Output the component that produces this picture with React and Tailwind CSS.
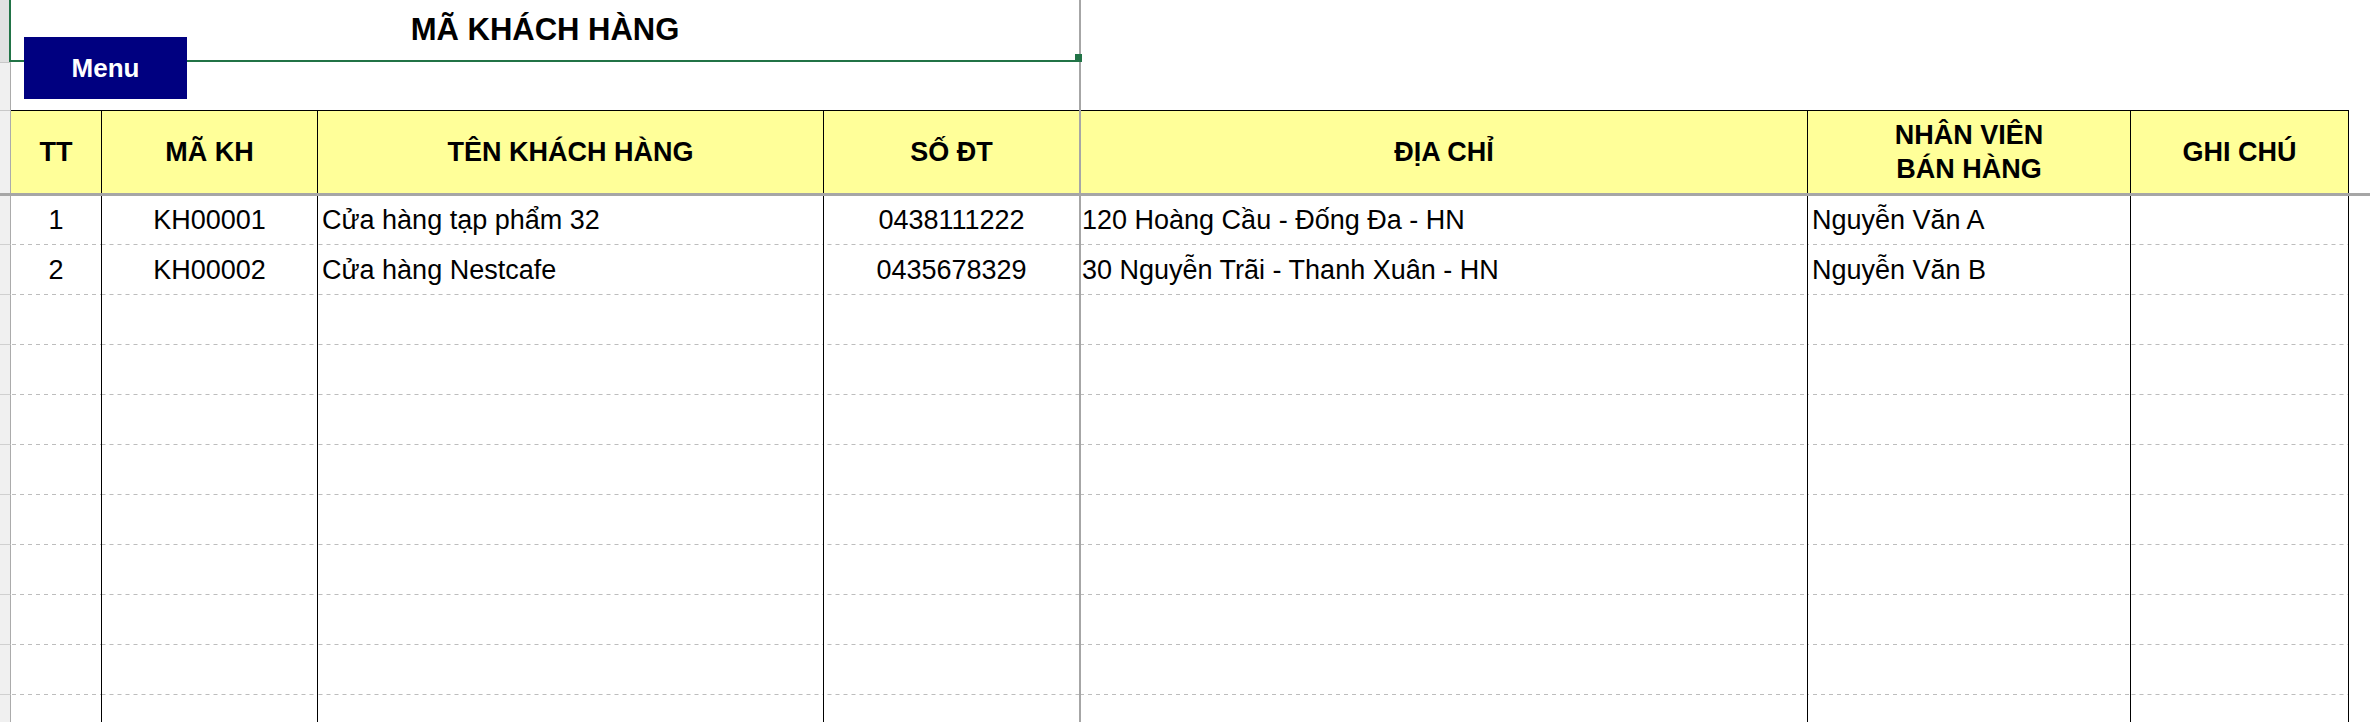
import React from "react";

const customers = [
  {
    tt: "1",
    code: "KH00001",
    name: "Cửa hàng tạp phẩm 32",
    phone: "0438111222",
    address: "120 Hoàng Cầu - Đống Đa - HN",
    seller: "Nguyễn Văn A",
    note: "",
  },
  {
    tt: "2",
    code: "KH00002",
    name: "Cửa hàng Nestcafe",
    phone: "0435678329",
    address: "30 Nguyễn Trãi - Thanh Xuân - HN",
    seller: "Nguyễn Văn B",
    note: "",
  },
];

// blank rows to fill the sheet below the data
const rows = [...customers, ...Array.from({ length: 9 }, () => ({}))];

const dash =
  "bg-[image:linear-gradient(to_right,#bdbdbd_50%,transparent_50%)] bg-[length:8px_1px] bg-bottom bg-repeat-x";

const Strip = ({ className = "" }) => (
  <div className={"w-[11px] shrink-0 border-r border-r-[#ababab] bg-[#f0f0f0] " + className} />
);

const Freeze = () => <div className="w-[2px] shrink-0 self-stretch bg-[#a6a6a6]" />;

const HeaderCell = ({ className = "", children }) => (
  <div
    className={
      "flex shrink-0 items-center justify-center text-center font-bold leading-[34px] bg-[#ffff99] border-t border-black " +
      className
    }
  >
    {children}
  </div>
);

const DataRow = ({ row, first }) => {
  const cell = "flex shrink-0 items-end pb-[9px] leading-[31px] whitespace-nowrap " + dash;
  return (
    <div className={"flex " + (first ? "h-[49px]" : "h-[50px]")}>
      <Strip className="border-b border-b-[#d0d0d0]" />
      <div className={cell + " w-[91px] justify-center border-r border-black"}>{row.tt}</div>
      <div className={cell + " w-[216px] justify-center border-r border-black"}>{row.code}</div>
      <div className={cell + " w-[506px] pl-[4px] border-r border-black"}>{row.name}</div>
      <div className={cell + " w-[255px] justify-center"}>{row.phone}</div>
      <Freeze />
      <div className={cell + " w-[727px] pl-[1px] border-r border-black"}>{row.address}</div>
      <div className={cell + " w-[323px] pl-[4px] border-r border-black"}>{row.seller}</div>
      <div className={cell + " w-[218px] pl-[4px] border-r border-black"}>{row.note}</div>
      <div className="flex-1" />
    </div>
  );
};

export default function App() {
  return (
    <div className="relative w-[2370px] h-[722px] overflow-hidden bg-white text-black text-[27px] font-['Liberation_Sans',Arial,sans-serif]">
      {/* Title row (selected merged cell) */}
      <div className="flex h-[62px]">
        <div className="w-[9px] shrink-0 bg-[#e1e1e1]" />
        <div className="relative flex w-[1070px] shrink-0 items-center justify-center border-l-2 border-b-2 border-[#217346] text-[31px] font-bold">
          MÃ KHÁCH HÀNG
          <span className="absolute right-[-3px] bottom-[-2px] w-[7px] h-[8px] bg-[#217346]" />
        </div>
        <Freeze />
        <div className="flex-1" />
      </div>

      {/* Empty row under the title */}
      <div className="flex h-[48px]">
        <Strip className="border-t border-t-[#c8c8c8]" />
        <div className="w-[1068px] shrink-0" />
        <Freeze />
        <div className="flex-1" />
      </div>

      {/* Header */}
      <div className="flex h-[83px]">
        <Strip className="border-t border-t-[#c8c8c8]" />
        <HeaderCell className="w-[91px] border-r">TT</HeaderCell>
        <HeaderCell className="w-[216px] border-r">MÃ KH</HeaderCell>
        <HeaderCell className="w-[506px] border-r">TÊN KHÁCH HÀNG</HeaderCell>
        <HeaderCell className="w-[255px]">SỐ ĐT</HeaderCell>
        <Freeze />
        <HeaderCell className="w-[727px] border-r">ĐỊA CHỈ</HeaderCell>
        <HeaderCell className="w-[323px] border-r">
          NHÂN VIÊN
          <br />
          BÁN HÀNG
        </HeaderCell>
        <HeaderCell className="w-[218px] border-r">GHI CHÚ</HeaderCell>
        <div className="flex-1" />
      </div>

      {/* Frozen pane split */}
      <div className="h-[3px] bg-[#a6a6a6]" />

      {rows.map((row, i) => (
        <DataRow key={i} row={row} first={i === 0} />
      ))}

      {/* Menu button shape */}
      <button className="absolute left-[24px] top-[37px] flex w-[163px] h-[62px] items-center justify-center bg-[#000080] text-[26px] font-bold text-white">
        Menu
      </button>
    </div>
  );
}
